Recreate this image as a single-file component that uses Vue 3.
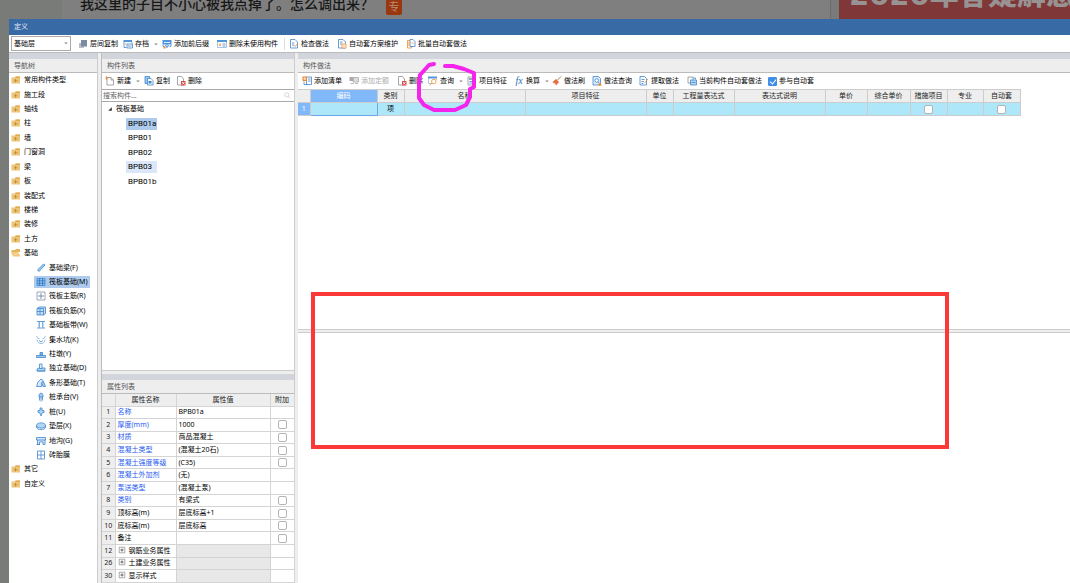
<script setup>
import { h, ref } from 'vue'

// Each icon is a list of [path, fill, stroke] on a 20x20 grid.
const B = '#3f86cc'
const O = '#f08a30'
const G = '#8a9099'
const icons = {
  folder: [['M1 5h6l2-2h9v14H1z', '#eec479'], ['M9 3h9v3H9z', '#e0ab4d'], ['M9 8v7M6 11.5h7', 'none', '#b98a30']],
  open: [['M1 4h7l2-2h8v6H1z', '#e6b65c'], ['M0 8h14l5 9H4z', '#f0c678'], ['M5 12h9', 'none', '#fbe7bd']],
  layers: [['M2 8h10v10H2z', '#b9bec7'], ['M6 2h12v13H6z', '#7d8ba0']],
  archive: [['M1 2h17v4H1z', '#4f96dc'], ['M2 6v11h5M18 6v3', 'none', B], ['M8 10h11v8H8z', '#fff', B], ['M10 14h7', 'none', B], ['M4 10h3', 'none', O]],
  affix: [['M1 2h18v9H1z', '#4f96dc'], ['M4 7h12', 'none', '#fff'], ['M2 11v4h3M18 11v4h-3', 'none', B], ['M10 8v9M6 12l4 5 4-5', 'none', B], ['M3 15h4v4H3z', O]],
  unused: [['M0 2h20v4H0z', '#4f96dc'], ['M1 6v11h18V6', '#fff', '#8fb7de'], ['M4 9l4 5M8 9l-4 5', 'none', O], ['M11 10h6M11 14h6', 'none', B]],
  check: [['M3 1h9l5 5v12H3z', '#fff', B], ['M6 8h5M6 12h4', 'none', B], ['M9 12l3 3 6-7', 'none', O]],
  scheme: [['M3 1h9l5 5v12H3z', '#fff', B], ['M6 6h5M6 10h4', 'none', B], ['M10 10h8v8h-8z', '#fff', O], ['M13 13h2v2h-2z', O]],
  batch: [['M3 3h8v15H3z', '#fff', O], ['M8 1h6l4 4v10H8z', '#fff', B], ['M6 5v9M11 8h4', 'none', O]],
  create: [['M4 3h8l5 5v10H4z', '#fff', G], ['M12 3v5h5', 'none', G], ['M3 0v8M0 4h7', 'none', O]],
  copy: [['M2 1h9v14H2z', '#9cc4ec', B], ['M7 5h7l4 4v9H7z', '#fff', B], ['M9 10h6v5H9z', B]],
  remove: [['M3 1h8l4 5v12H3z', '#fff', G], ['M10 10h9v9h-9z', '#d84b4b'], ['M12 12l5 5M17 12l-5 5', 'none', '#fff']],
  addList: [['M9 2h10v15H9z', '#fff', B], ['M12 6h5M12 10h5', 'none', B], ['M1 1h9v9H1z', O], ['M5.5 3v5M3 5.5h5', 'none', '#fff'], ['M4 11v6h7', 'none', B]],
  addQuota: [['M8 3h11v9H8z', '#ddd', '#aaa'], ['M1 2h8v8H1z', '#aaa'], ['M3 15h7M12 15h6', 'none', '#aaa']],
  query: [['M0 1h18v4H0z', '#4f96dc'], ['M1 5v10h5M17 5v3', 'none', '#8fb7de'], ['M16 11a4.5 4.5 0 1 1-9 0a4.5 4.5 0 1 1 9 0z', '#fff', O], ['M8 14l-5 5', 'none', O]],
  feature: [['M2 2h15v16H2z', '#fff', G], ['M4 4h11v4H4z', '#9aa6b5'], ['M5 11h9M5 14h9', 'none', B]],
  brush: [['M18 1l-7 7', 'none', '#8c5b3c'], ['M8 6l6 6-6 7-7-7z', '#e66b3d'], ['M4 14l4 3', 'none', '#fff']],
  find: [['M2 1h11l4 4v13H2z', '#dcebf9', B], ['M13 9a3.5 3.5 0 1 1-7 0a3.5 3.5 0 1 1 7 0z', '#fff', B], ['M12 12l4 4', 'none', B], ['M12 19l4-6 4 6z', O]],
  extract: [['M2 1h9l4 4v13H2z', '#fff', B], ['M5 7h6M5 11h5M5 15h4', 'none', B], ['M11 14l7-8', 'none', O]],
  auto: [['M2 2h10v12H2z', '#fff', G], ['M7 8h12v10H7z', '#b8d6f3', B], ['M9 13h8M12 4h5v3', 'none', B]],
  beam: [['M3 14L15 2l3 2L6 17z', '#9ec8f0', B]],
  raft: [['M2 3h16v14H2z', '#8fc0ef', B], ['M2 7.5h16M2 12.5h16M7 3v14M13 3v14', 'none', '#2f78bf']],
  mainBar: [['M2 2h16v16H2z', '#fff', G], ['M10 4v12M4 10h12', 'none', '#4f7fae']],
  negBar: [['M2 5l4-3h13v13l-4 3H2z', '#c5def6', B], ['M2 5h13v13M8 5v13M2 11h13', 'none', B]],
  strip: [['M2 3h16M2 16h16', 'none', B], ['M5 4h3v12H5zM12 4h3v12h-3z', '#7db1e6']],
  pit: [['M1 2l3 5h3M19 2l-3 5h-3M2 9c0 11 16 11 16 0', 'none', '#7fb0df'], ['M6 11l4 3 4-3', 'none', B]],
  pier: [['M1 13h18v4H1z', '#a7cdf2', B], ['M8 7h5v6H8z', '#7db1e6', B]],
  single: [['M2 12l4-2h12v6H2z', '#b5d5f4', B], ['M7 2h5v9H7z', '#e2effb', B], ['M2 16h16', 'none', B]],
  stripBase: [['M1 17l3-9 6-6 5 4-4 5v6z', '#d9eafa', B], ['M11 9l4-2 4 10h-5z', '#a7cdf2', B]],
  cap: [['M6 10V5q4-6 8 0v5z', '#a7cdf2', B], ['M7 10v7M10 10v9M13 10v7', 'none', B]],
  pile: [['M8 2h4v5h4v4h-3l-3 7-3-7H4V7h4z', '#b5d5f4', B]],
  cushion: [['M1 9c0-7 18-7 18 0s-18 7-18 0z', '#b5d5f4', B], ['M1 9v3c0 7 18 7 18 0V9', 'none', B]],
  trench: [['M1 3h18v5H1zM3 8v9h4v-5h7v5h4V8', '#d3e6f9', B], ['M1 17h7', 'none', B]],
  brick: [['M3 2h14v16H3z', '#fff', B], ['M10 2v16M3 10h14', 'none', B]],
  expand: [['M3 3h14v14H3z', '#fff', '#777'], ['M10 6v8M6 10h8', 'none', '#222']],
  search: [['M14 8a6 6 0 1 1-12 0a6 6 0 1 1 12 0zM12 12l6 6', 'none', '#bbb']],
  chevron: [['M4 8h12l-6 6z', '#888']],
  caret: [['M16 4v12H4z', '#333']],
}
const Icon = ({ name }) =>
  h('svg', { viewBox: '0 0 20 20', class: 'icon', 'aria-hidden': 'true' },
    icons[name].map(([d, fill, stroke]) =>
      h('path', { d, fill, stroke: stroke || 'none', 'stroke-width': 1.6 })))
Icon.props = ['name']

const mainTools = [
  { t: '层间复制', i: 'layers' }, { t: '存档', i: 'archive', more: true },
  { t: '添加前后缀', i: 'affix' }, { t: '删除未使用构件', i: 'unused' },
  { t: '检查做法', i: 'check', sep: true }, { t: '自动套方案维护', i: 'scheme' },
  { t: '批量自动套做法', i: 'batch' },
]
const listTools = [
  { t: '新建', i: 'create', more: true }, { t: '复制', i: 'copy' }, { t: '删除', i: 'remove' },
]
const methodTools = [
  { t: '添加清单', i: 'addList' }, { t: '添加定额', i: 'addQuota', off: true }, { t: '删除', i: 'remove' },
  { t: '查询', i: 'query', more: true }, { t: '项目特征', i: 'feature' }, { t: '换算', fx: true, more: true },
  { t: '做法刷', i: 'brush' }, { t: '做法查询', i: 'find' }, { t: '提取做法', i: 'extract' },
  { t: '当前构件自动套做法', i: 'auto' },
]
const folders = ['常用构件类型', '施工段', '轴线', '柱', '墙', '门窗洞', '梁', '板', '装配式', '楼梯', '装修', '土方']
const leaves = [
  ['基础梁(F)', 'beam'], ['筏板基础(M)', 'raft'], ['筏板主筋(R)', 'mainBar'], ['筏板负筋(X)', 'negBar'],
  ['基础板带(W)', 'strip'], ['集水坑(K)', 'pit'], ['柱墩(Y)', 'pier'], ['独立基础(D)', 'single'],
  ['条形基础(T)', 'stripBase'], ['桩承台(V)', 'cap'], ['桩(U)', 'pile'], ['垫层(X)', 'cushion'],
  ['地沟(G)', 'trench'], ['砖胎膜', 'brick'],
]
const nav = [
  ...folders.map((t) => ({ t, i: 'folder' })),
  { t: '基础', i: 'open' },
  ...leaves.map(([t, i]) => ({ t, i, leaf: true })),
  { t: '其它', i: 'folder' }, { t: '自定义', i: 'folder' },
]
const activeNav = ref('筏板基础(M)')
const components = ['BPB01a', 'BPB01', 'BPB02', 'BPB03', 'BPB01b']
const activeComponent = ref('BPB01a')
const props = [
  { n: 1, k: '名称', v: 'BPB01a', blue: true },
  { n: 2, k: '厚度(mm)', v: '1000', blue: true, box: true },
  { n: 3, k: '材质', v: '商品混凝土', blue: true, box: true },
  { n: 4, k: '混凝土类型', v: '(混凝土20石)', blue: true, box: true },
  { n: 5, k: '混凝土强度等级', v: '(C35)', blue: true, box: true },
  { n: 6, k: '混凝土外加剂', v: '(无)', blue: true },
  { n: 7, k: '泵送类型', v: '(混凝土泵)', blue: true },
  { n: 8, k: '类别', v: '有梁式', blue: true, box: true },
  { n: 9, k: '顶标高(m)', v: '层底标高+1', box: true },
  { n: 10, k: '底标高(m)', v: '层底标高', box: true },
  { n: 11, k: '备注', v: '', box: true },
  { n: 12, k: '钢筋业务属性', group: true },
  { n: 26, k: '土建业务属性', group: true },
  { n: 30, k: '显示样式', group: true },
]
const columns = ['编码', '类别', '名称', '项目特征', '单位', '工程量表达式', '表达式说明', '单价', '综合单价', '措施项目', '专业', '自动套']
const autoApply = ref(true)
</script>

<template>
  <div class="page">
    <header class="backdrop">
      <div class="question">
        <h1>我这里的子目不小心被我点掉了。怎么调出来？</h1>
        <span class="badge">专</span>
      </div>
      <div class="banner">2020年答疑解惑</div>
    </header>

    <main class="window">
      <div class="titlebar">定义</div>
      <div class="toolbar main-tools">
        <div class="floor">
          <select aria-label="楼层"><option>基础层</option></select>
          <Icon name="chevron" />
        </div>
        <button v-for="b in mainTools" :key="b.t" type="button" class="tool" :class="{ sep: b.sep }">
          <Icon :name="b.i" /><span>{{ b.t }}</span><Icon v-if="b.more" name="chevron" class="more" />
        </button>
      </div>

      <div class="panes">
        <section class="pane nav-pane">
          <h2>导航树</h2>
          <nav class="nav">
            <div v-for="n in nav" :key="n.t" class="nav-row" :class="{ leaf: n.leaf }">
              <button type="button" :class="{ active: activeNav === n.t }" @click="activeNav = n.t">
                <Icon :name="n.i" /><span>{{ n.t }}</span>
              </button>
            </div>
          </nav>
        </section>

        <div class="middle">
          <section class="pane list-pane">
            <h2>构件列表</h2>
            <div class="toolbar list-tools">
              <button v-for="b in listTools" :key="b.t" type="button" class="tool">
                <Icon :name="b.i" /><span>{{ b.t }}</span><Icon v-if="b.more" name="chevron" class="more" />
              </button>
            </div>
            <div class="search">
              <input type="text" placeholder="搜索构件..." aria-label="搜索构件">
              <Icon name="search" />
            </div>
            <div class="tree">
              <div class="root"><Icon name="caret" /><span>筏板基础</span></div>
              <div v-for="c in components" :key="c" class="child">
                <button type="button" :class="{ active: activeComponent === c, hover: c === 'BPB03' }" @click="activeComponent = c">{{ c }}</button>
              </div>
            </div>
          </section>

          <section class="pane prop-pane">
            <h2>属性列表</h2>
            <table class="props">
              <colgroup><col class="p-num"><col class="p-name"><col class="p-value"><col class="p-box"></colgroup>
              <thead>
                <tr><th></th><th>属性名称</th><th>属性值</th><th>附加</th></tr>
              </thead>
              <tbody>
                <tr v-for="p in props" :key="p.n" :class="{ group: p.group }">
                  <th scope="row">{{ p.n }}</th>
                  <td :class="{ blue: p.blue }"><Icon v-if="p.group" name="expand" />{{ p.k }}</td>
                  <td class="value">{{ p.v }}</td>
                  <td class="boxcell"><input v-if="p.box" type="checkbox" :aria-label="p.k + ' 附加'"></td>
                </tr>
              </tbody>
            </table>
          </section>
        </div>

        <div class="right">
          <section class="pane method-pane">
            <h2>构件做法</h2>
            <div class="toolbar method-tools">
              <button v-for="b in methodTools" :key="b.t" type="button" class="tool" :disabled="b.off">
                <i v-if="b.fx" class="fx">fx</i><Icon v-else :name="b.i" /><span>{{ b.t }}</span><Icon v-if="b.more" name="chevron" class="more" />
              </button>
              <label class="auto"><input v-model="autoApply" type="checkbox"><span>参与自动套</span></label>
            </div>
            <table class="methods">
              <colgroup><col v-for="n in 13" :key="n" :class="'m' + n"></colgroup>
              <thead>
                <tr><th></th><th v-for="(c, i) in columns" :key="c" :class="{ current: i === 0 }">{{ c }}</th></tr>
              </thead>
              <tbody>
                <tr>
                  <th scope="row">1</th>
                  <td v-for="(c, i) in columns" :key="c" :class="{ focus: i === 0 }">
                    <template v-if="c === '类别'">项</template>
                    <input v-if="c === '措施项目' || c === '自动套'" type="checkbox" :aria-label="c">
                  </td>
                </tr>
              </tbody>
            </table>
            <svg class="circle" viewBox="0 0 62 54" aria-hidden="true">
              <path d="M18 4L13 5L4 15L3 23V38L8 45L18 50H39L50 45L54 37V29L58 27V13L48 9L37 6L29 6" />
            </svg>
          </section>
          <section class="detail-pane"></section>
          <div class="marker"></div>
        </div>
      </div>
    </main>
  </div>
</template>

<style>
html, body { margin: 0; background: #fff; }
</style>

<style scoped>
* { box-sizing: border-box; }
.page {
  display: flex;
  flex-direction: column;
  height: 100vh;
  overflow: hidden;
  background: #797b79;
  color: #000;
  font: 7px/10px "Noto Sans", "Noto Sans CJK SC", sans-serif;
}
button, input, select { font: inherit; color: inherit; margin: 0; padding: 0; border: 0; background: none; }
button { display: inline-flex; align-items: center; white-space: nowrap; }
h1, h2 { margin: 0; font-weight: 400; }
.icon { width: 10px; height: 10px; flex: none; display: block; }

.backdrop { display: flex; height: 19px; flex: none; padding-left: 62px; overflow: hidden; }
.question {
  flex: 1;
  display: flex;
  align-items: flex-end;
  gap: 12px;
  padding: 0 0 4px 18px;
  background: #7f7f7f;
  border-right: 1px solid #6c6c6c;
}
.question h1 { color: #171717; font-size: 14px; line-height: 22px; font-weight: 500; white-space: nowrap; }
.badge { width: 16px; height: 16px; border-radius: 2px; background: #9a370e; color: #b98d77; font-size: 11px; line-height: 15px; text-align: center; }
.banner {
  width: 231px;
  margin-left: 8px;
  padding: 0 0 5px 10px;
  display: flex;
  align-items: flex-end;
  background: #803737;
  color: #989292;
  font: 900 29px/38px "DejaVu Sans", "Noto Sans CJK SC", sans-serif;
  white-space: nowrap;
  overflow: hidden;
}

.window { flex: 1; min-height: 0; display: flex; flex-direction: column; margin-left: 9px; background: #eee; }
.titlebar { height: 16px; flex: none; padding: 3px 5px; background: #386aa6; color: #e4edf7; }
.toolbar { display: grid; align-items: center; background: #fff; }
.main-tools {
  height: 18px;
  flex: none;
  grid-template-columns: 69px 45px 39px 55px 72px 48px 69px 80px;
  border-bottom: 1px solid #bbb;
}
.tool { gap: 2px; height: 12px; }
.tool:disabled { color: #aaa; }
.tool .more { width: 6px; height: 6px; margin-left: 2px; }
.sep { position: relative; }
.sep::before { content: ""; position: absolute; left: -5px; top: 0; height: 12px; border-left: 1px solid #ddd; }
.floor { position: relative; width: 60px; margin-left: 2px; }
.floor select { display: block; width: 100%; height: 15px; padding-left: 2px; border: 1px solid #aaa; appearance: none; background: #fff; border-radius: 0; }
.floor .icon { position: absolute; right: 2px; top: 4px; width: 6px; height: 6px; pointer-events: none; }

.panes { flex: 1; min-height: 0; display: flex; gap: 3px; }
.pane { background: #fff; }
.pane h2 { padding: 2px 5px 1px; height: 20px; border-top: 6px solid #d3d5dc; border-bottom: 1px solid #bbb; background: #eee; color: #555; font-size: 7px; line-height: 10px; }
.nav-pane { width: 89px; flex: none; border-right: 1px solid #ccc; }
.nav { display: grid; grid-auto-rows: 1fr; height: 418px; }
.nav-row { display: flex; align-items: center; padding-left: 2px; }
.nav-row button { gap: 3px; height: 12px; }
.nav-row.leaf { padding-left: 25px; }
.nav-row.leaf button { padding: 0 2px; }
.active, .nav-row .active { background: #aecbee; }

.middle { width: 194px; flex: none; display: flex; flex-direction: column; gap: 3px; border-left: 1px solid #bbb; border-right: 1px solid #ccc; }
.list-pane { flex: 1; min-height: 0; border-bottom: 1px solid #ccc; }
.list-tools { height: 16px; grid-template-columns: 39px 32px 40px; padding-left: 3px; }
.search { display: flex; align-items: center; height: 13px; padding-right: 3px; border-top: 1px solid #aaa; border-bottom: 1px solid #aaa; }
.search input { flex: 1; min-width: 0; height: 11px; padding-left: 1px; outline: 0; }
.search input::placeholder { color: #666; opacity: 1; }
.search .icon { width: 7px; height: 7px; }
.tree { display: grid; grid-auto-rows: 1fr; height: 87px; }
.root { display: flex; align-items: center; gap: 3px; padding-left: 5px; }
.root .icon { width: 6px; height: 6px; }
.child { display: flex; align-items: center; padding-left: 24px; }
.child button { width: 31px; height: 12px; padding-left: 2px; font-family: Roboto, sans-serif; font-size: 8px; }
.child .hover { background: #dbe7f8; }

table { border-collapse: collapse; table-layout: fixed; }
th, td { padding: 0; height: 12px; line-height: 10px; font-weight: 400; white-space: nowrap; overflow: hidden; }
.prop-pane { flex: none; }
.props { width: 192px; height: 189px; }
.props th, .props td { border-right: 1px solid #d4d4d4; border-bottom: 1px solid #d4d4d4; text-align: left; }
.props th { background: #eee; text-align: center; color: #222; }
.props td { padding-left: 2px; }
.props td .icon { display: inline-block; width: 8px; height: 8px; margin-right: 3px; vertical-align: -1px; }
.props td.blue { color: #1f5cf0; }
.props td.boxcell { padding: 0; text-align: center; }
.group .value { background: #e8e8e8; }
.p-num { width: 13px; }
.p-name { width: 61px; }
.p-value { width: 94px; }
.p-box { width: 24px; }
input[type="checkbox"] { appearance: none; display: block; width: 9px; height: 9px; margin: 0 auto; border: 1px solid #b4b4b4; border-radius: 2px; background: #fff; }

.right { position: relative; flex: 1; min-width: 0; display: flex; flex-direction: column; gap: 2px; }
.method-pane { position: relative; flex: 21; min-height: 0; border-bottom: 1px solid #ccc; }
.detail-pane { flex: 19; min-height: 0; background: #fff; border-top: 1px solid #ccc; }
.method-tools {
  height: 16px;
  padding-left: 4px;
  grid-template-columns: 47px 48px 31px 39px 47px 38px 40px 47px 48px 81px 60px;
}
.fx { width: 10px; color: #2a6fb8; font: italic 10px/10px "Liberation Serif", serif; }
.auto { display: flex; align-items: center; gap: 2px; }
.auto input[type="checkbox"] { margin: 0; }
.auto input[type="checkbox"]:checked { border-color: #3f8ee8; background: #3f8ee8; border-radius: 1px; }
.auto input:checked::after {
  content: "";
  display: block;
  width: 3px;
  height: 5px;
  margin: 0 auto;
  border: solid #fff;
  border-width: 0 1px 1px 0;
  transform: rotate(40deg);
}
.methods { width: 722px; }
.methods th, .methods td { height: 13px; border: 1px solid #ccc; border-left: 0; text-align: center; }
.methods th { background: #eee; color: #222; }
.methods td { background: #ade7f9; }
.methods th.current { background: #80b8fa; color: #fff; }
.methods tbody th { background: #80b8fa; color: #fff; }
.methods td.focus { border: 1px solid #6ba6ea; }
.m1 { width: 12px; }
.m2 { width: 67px; }
.m3, .m6 { width: 27px; }
.m4, .m5 { width: 121px; }
.m7 { width: 61px; }
.m8 { width: 91px; }
.m9 { width: 42px; }
.m10 { width: 43px; }
.m11, .m13 { width: 37px; }
.m12 { width: 36px; }
.circle { position: absolute; left: 118px; top: 7px; width: 62px; height: 54px; }
.circle path { fill: none; stroke: #f524ec; stroke-width: 4; stroke-linecap: round; stroke-linejoin: round; }
.marker { position: absolute; left: 13px; right: 121px; top: 45%; bottom: 134px; border: 4px solid #fb3838; }
</style>
